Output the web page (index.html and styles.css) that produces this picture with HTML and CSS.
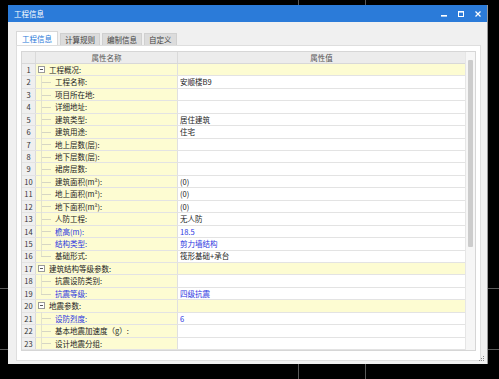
FILE: index.html
```html
<!DOCTYPE html>
<html>
<head>
<meta charset="utf-8">
<link rel="stylesheet" href="styles.css">
</head>
<body>
<div class="canvas">
  <div class="vline v1"></div>
  <div class="vline v2"></div>
  <div class="hline h1"></div>
  <div class="hline h2"></div>
</div>
<div class="window">
  <div class="titlebar">
    <span class="title">工程信息</span>
    <div class="ctrls">
      <svg width="8" height="8" viewBox="0 0 8 8"><rect x="1" y="5" width="6" height="1.6" fill="#fff"/></svg>
      <svg width="8" height="8" viewBox="0 0 8 8"><rect x="1.5" y="1.5" width="5" height="5" fill="none" stroke="#fff" stroke-width="1"/><rect x="1" y="1" width="6" height="1.6" fill="#fff"/></svg>
      <svg width="8" height="8" viewBox="0 0 8 8"><path d="M1.5 1.5 L6.5 6.5 M6.5 1.5 L1.5 6.5" stroke="#fff" stroke-width="1.2"/></svg>
    </div>
  </div>
  <div class="body">
    <div class="tabs">
      <span class="tab active">工程信息</span>
      <span class="tab">计算规则</span>
      <span class="tab">编制信息</span>
      <span class="tab">自定义</span>
    </div>
    <div class="panel">
      <div class="grid">
        <div class="table">
          <div class="hdr"><span class="num"></span><span class="name">属性名称</span><span class="val">属性值</span></div>
          <div class="row group"><span class="num">1</span><span class="name"><i class="tog"></i>工程概况:</span><span class="val"></span></div>
          <div class="row child"><span class="num">2</span><span class="name">工程名称:</span><span class="val">安顺楼B9</span></div>
          <div class="row child"><span class="num">3</span><span class="name">项目所在地:</span><span class="val"></span></div>
          <div class="row child"><span class="num">4</span><span class="name">详细地址:</span><span class="val"></span></div>
          <div class="row child"><span class="num">5</span><span class="name">建筑类型:</span><span class="val">居住建筑</span></div>
          <div class="row child"><span class="num">6</span><span class="name">建筑用途:</span><span class="val">住宅</span></div>
          <div class="row child"><span class="num">7</span><span class="name">地上层数(层):</span><span class="val"></span></div>
          <div class="row child"><span class="num">8</span><span class="name">地下层数(层):</span><span class="val"></span></div>
          <div class="row child"><span class="num">9</span><span class="name">裙房层数:</span><span class="val"></span></div>
          <div class="row child"><span class="num">10</span><span class="name">建筑面积(m²):</span><span class="val">(0)</span></div>
          <div class="row child"><span class="num">11</span><span class="name">地上面积(m²):</span><span class="val">(0)</span></div>
          <div class="row child"><span class="num">12</span><span class="name">地下面积(m²):</span><span class="val">(0)</span></div>
          <div class="row child"><span class="num">13</span><span class="name">人防工程:</span><span class="val">无人防</span></div>
          <div class="row child blue"><span class="num">14</span><span class="name">檐高(m):</span><span class="val">18.5</span></div>
          <div class="row child blue"><span class="num">15</span><span class="name">结构类型:</span><span class="val">剪力墙结构</span></div>
          <div class="row child last"><span class="num">16</span><span class="name">基础形式:</span><span class="val">筏形基础+承台</span></div>
          <div class="row group"><span class="num">17</span><span class="name"><i class="tog"></i>建筑结构等级参数:</span><span class="val"></span></div>
          <div class="row child"><span class="num">18</span><span class="name">抗震设防类别:</span><span class="val"></span></div>
          <div class="row child blue last"><span class="num">19</span><span class="name">抗震等级:</span><span class="val">四级抗震</span></div>
          <div class="row group"><span class="num">20</span><span class="name"><i class="tog"></i>地震参数:</span><span class="val"></span></div>
          <div class="row child blue"><span class="num">21</span><span class="name">设防烈度:</span><span class="val">6</span></div>
          <div class="row child"><span class="num">22</span><span class="name">基本地震加速度（g）:</span><span class="val"></span></div>
          <div class="row child"><span class="num">23</span><span class="name">设计地震分组:</span><span class="val"></span></div>
        </div>
        <div class="scroll"><div class="thumb"></div></div>
      </div>
    </div>
    <div class="grip">
      <svg width="6" height="6" viewBox="0 0 6 6"><rect x="4" y="0" width="1" height="1" fill="#888"/><rect x="2" y="2" width="1" height="1" fill="#888"/><rect x="4" y="2" width="1" height="1" fill="#888"/><rect x="0" y="4" width="1" height="1" fill="#888"/><rect x="2" y="4" width="1" height="1" fill="#888"/><rect x="4" y="4" width="1" height="1" fill="#888"/></svg>
    </div>
  </div>
</div>
</body>
</html>
```
FILE: styles.css
```css
* { box-sizing: border-box; }
html, body { margin: 0; padding: 0; }
body {
  background: #000;
  width: 499px;
  height: 379px;
  overflow: hidden;
  position: relative;
  font-family: "Noto Sans CJK SC", "Noto Sans", sans-serif;
  font-size: 7.5px;
  color: #222;
  padding: 5px 0 0 8px;
}
.canvas { position: absolute; inset: 0; }
.vline { position: absolute; top: 0; bottom: 0; width: 1px; background: #5a5a5a; }
.v1 { left: 298px; }
.v2 { left: 365px; }
.hline { position: absolute; left: 0; right: 0; height: 1px; background: #5a5a5a; }
.h1 { top: 288px; }
.h2 { top: 349px; }

.window {
  position: relative;
  width: 480px;
  height: 359px;
  display: flex;
  flex-direction: column;
  background: #f0f0f0;
  border-right: 1px solid #9a9a9a;
}
.titlebar {
  height: 17px;
  background: #2b7bd9;
  display: flex;
  align-items: center;
  justify-content: space-between;
  padding: 0 5px 0 6px;
}
.title { color: #fff; font-size: 7.5px; line-height: 1; }
.ctrls { display: flex; gap: 9px; align-items: center; }
.ctrls svg { display: block; }

.body {
  flex: 1;
  padding: 9px 6px 0 8px;
  display: flex;
  flex-direction: column;
  position: relative;
}
.tabs { display: flex; gap: 2px; height: 14px; align-items: flex-end; }
.tab {
  height: 12px;
  padding: 0 4px;
  background: #dcdcdc;
  color: #444;
  display: flex;
  align-items: center;
  line-height: 1;
  border: 1px solid #d0d0d0;
  border-bottom: none;
}
.tab.active {
  height: 14px;
  background: #fff;
  color: #2b7bd9;
  border-color: #d8d8d8;
  padding: 0 5px;
}
.panel {
  width: 465px;
  height: 316px;
  background: #fff;
  border: 1px solid #dedede;
  padding: 5px 5px 0 4px;
}
.grid {
  display: flex;
  width: 455px;
  height: 300px;
  border: 1px solid #d6d6d6;
}
.table { width: 444px; display: flex; flex-direction: column; }
.hdr, .row { display: flex; }
.hdr {
  height: 12px;
  background: #ececec;
  color: #555;
  border-bottom: 1px solid #d8d8d8;
}
.hdr span { display: flex; align-items: center; justify-content: center; line-height: 1; }
.num { width: 14px; flex: none; }
.name { width: 142px; flex: none; border-right: 1px solid #e0e0e0; }
.hdr .num { border-right: 1px solid #dadada; }
.hdr .name { border-right: 1px solid #dadada; }
.val { flex: 1; }

.row {
  height: 12.5px;
  border-bottom: 1px solid #e3e3e3;
  line-height: 1;
}
.row span { display: flex; align-items: center; }
.row .num {
  background: #efefef;
  justify-content: center;
  color: #333;
  border-right: 1px solid #dadada;
}
.row .name { background: #fdfcd2; position: relative; }
.row .val { padding-left: 2px; background: #fff; }
.row.group .val { background: #fdfcd2; }
.row.group .name { padding-left: 2px; }
.row.child .name { padding-left: 19px; }
.row.child .name::before {
  content: "";
  position: absolute;
  left: 5px;
  top: 50%;
  width: 10px;
  border-top: 1px solid #d6d6c4;
}
.row.child .name::after {
  content: "";
  position: absolute;
  left: 5px;
  top: -1px;
  bottom: -1px;
  border-left: 1px solid #e2e2cc;
}
.row.child.last .name::after { bottom: 50%; }
.tog {
  width: 7px;
  height: 7px;
  border: 1px solid #9a9a9a;
  background: #fff;
  position: relative;
  margin-right: 4px;
  flex: none;
}
.tog::before {
  content: "";
  position: absolute;
  left: 1px;
  right: 1px;
  top: 2px;
  border-top: 1px solid #555;
}
.row.blue span.name, .row.blue span.val { color: #2a35e0; }

.scroll {
  width: 10px;
  background: #f6f6f6;
  border-left: 1px solid #e6e6e6;
  padding: 8px 2px 0 2px;
}
.thumb { width: 5px; height: 187px; background: #cccccc; border-radius: 1px; }

.grip { position: absolute; right: 2px; bottom: 2px; }
.grip svg { display: block; }
```
